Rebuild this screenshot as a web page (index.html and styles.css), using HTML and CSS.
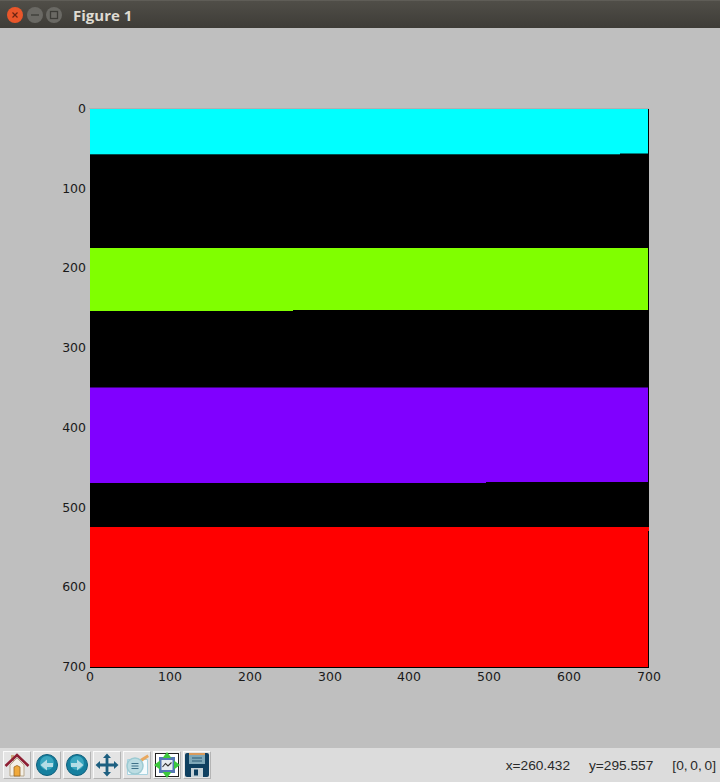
FILE: index.html
```html
<!DOCTYPE html>
<html lang="en">

<head>
    <meta charset="UTF-8">
    <meta name="viewport" content="width=device-width, initial-scale=1.0">
    <title>Figure 1</title>
    <link rel="stylesheet" href="styles.css">
</head>

<body>

    <header class="titlebar">
        <div class="win-buttons">
            <span class="win-btn win-close">
                <svg width="16" height="16" viewBox="0 0 16 16"><path class="glyph-close" d="M5.500 5.500l5 5M10.500 5.500l-5 5"/></svg>
            </span>
            <span class="win-btn">
                <svg width="16" height="16" viewBox="0 0 16 16"><path class="glyph-win" d="M4 8h8"/></svg>
            </span>
            <span class="win-btn">
                <svg width="16" height="16" viewBox="0 0 16 16"><rect class="glyph-win" x="4.500" y="4.500" width="7" height="7"/></svg>
            </span>
        </div>
        <span class="win-title">Figure 1</span>
    </header>

    <main class="canvas">
        <svg class="plot" width="720" height="720" viewBox="0 28 720 720">
            <rect class="frame-top" x="89" y="108" width="560" height="1"/>
            <rect class="black" x="90" y="109" width="559" height="559"/>
            <rect class="cyan" x="90" y="109" width="558" height="44.500"/>
            <rect class="cyan" x="90" y="153" width="530" height="1.300"/>
            <rect class="green" x="90" y="248" width="558" height="62"/>
            <rect class="green" x="90" y="310" width="203" height="1"/>
            <rect class="purple" x="90" y="387.500" width="558" height="94.500"/>
            <rect class="purple" x="90" y="482" width="396" height="1"/>
            <rect class="red" x="90" y="527" width="558" height="140"/>
            <rect class="red" x="648" y="527" width="1" height="4"/>

            <g class="ticks-y">
                <text x="86" y="113">0</text>
                <text x="86" y="193">100</text>
                <text x="86" y="272">200</text>
                <text x="86" y="352">300</text>
                <text x="86" y="432">400</text>
                <text x="86" y="512">500</text>
                <text x="86" y="591">600</text>
                <text x="86" y="671">700</text>
            </g>
            <g class="ticks-x">
                <text x="90" y="681">0</text>
                <text x="170" y="681">100</text>
                <text x="250" y="681">200</text>
                <text x="330" y="681">300</text>
                <text x="409" y="681">400</text>
                <text x="489" y="681">500</text>
                <text x="569" y="681">600</text>
                <text x="649" y="681">700</text>
            </g>
        </svg>
    </main>

    <footer class="toolbar">
        <div class="tools">
            <button class="tool" type="button" title="Home">
                <svg width="26" height="26" viewBox="0 0 26 26">
                    <rect x="7" y="3" width="3" height="6" fill="#c9a77c"/>
                    <path d="M6 13L13 6l7 7v11H6z" fill="#f3efe6" stroke="#b9a88c"/>
                    <path d="M10 24v-9q3-3 6 0v9z" fill="#f0a93a" stroke="#9a6a2a" stroke-width=".8"/>
                    <path d="M1.500 14L13 3l11.500 11" fill="none" stroke="#8e1f33" stroke-width="2.600"/>
                </svg>
            </button>
            <button class="tool" type="button" title="Back">
                <svg width="26" height="26" viewBox="0 0 26 26">
                    <circle cx="13" cy="13" r="10.500" fill="#16809f" stroke="#0e5f7c"/>
                    <circle cx="13" cy="11" r="7" fill="#3aa6bf"/>
                    <path d="M6.500 13L13 7.500V11h6v4h-6v3.500z" fill="#b5dde6"/>
                </svg>
            </button>
            <button class="tool" type="button" title="Forward">
                <svg width="26" height="26" viewBox="0 0 26 26">
                    <circle cx="13" cy="13" r="10.500" fill="#16809f" stroke="#0e5f7c"/>
                    <circle cx="13" cy="11" r="7" fill="#3aa6bf"/>
                    <path d="M19.500 13L13 7.500V11H7v4h6v3.500z" fill="#b5dde6"/>
                </svg>
            </button>
            <button class="tool" type="button" title="Pan">
                <svg width="26" height="26" viewBox="0 0 26 26">
                    <path d="M13 1.500l4 4.500h-2.600v5.600H20V9l4.500 4-4.500 4v-2.600h-5.600V20H17l-4 4.500L9 20h2.600v-5.600H6V17l-4.500-4L6 9v2.600h5.600V6H9z" fill="#1d5f80"/>
                </svg>
            </button>
            <button class="tool" type="button" title="Subplots">
                <svg width="26" height="26" viewBox="0 0 26 26">
                    <path d="M3.500 7.500h20v15h-20z" fill="#f4fbfd" stroke="#a9d3e0"/>
                    <path d="M13 9L23.500 2.500l1.500 2.500-10 6.500z" fill="#e8a860"/>
                    <circle cx="11" cy="14" r="8" fill="#bcdde3" stroke="#9ccad2" stroke-width="1.500"/>
                    <path d="M7.500 11.500h7M7.500 14h7M7.500 16.500h7" stroke="#3f7189" stroke-width="1.100"/>
                </svg>
            </button>
            <button class="tool tool-active" type="button" title="Fit">
                <svg width="26" height="26" viewBox="0 0 26 26">
                    <rect x="1.500" y="1.500" width="23" height="23" fill="#fff" stroke="#222"/>
                    <rect x="5" y="5" width="16" height="16" fill="#5577b5"/>
                    <rect x="7.500" y="8" width="11" height="10" fill="#e8edf2"/>
                    <path d="M8.500 15l3-3.500 2.500 2.500 3.500-3.500" fill="none" stroke="#333" stroke-width="1.100"/>
                    <path d="M13 0l4.500 6h-9zM13 26l4.500-6h-9zM0 13l6-4.500v9zM26 13l-6-4.500v9z" fill="#3cc83c"/>
                </svg>
            </button>
            <button class="tool" type="button" title="Save">
                <svg width="26" height="26" viewBox="0 0 26 26">
                    <rect x="1" y="1" width="24" height="24" rx="2" fill="#0f4060"/>
                    <rect x="5" y="1" width="16" height="11" fill="#7fa8b8"/>
                    <rect x="5" y="1" width="16" height="2" fill="#d99a5b"/>
                    <path d="M8 6h10M8 9h10" stroke="#2c5a74" stroke-width="1.200"/>
                    <rect x="7" y="16" width="12" height="9" fill="#c7d3d8"/>
                    <rect x="10" y="17.500" width="4" height="6" fill="#0f4060"/>
                </svg>
            </button>
        </div>
        <div class="status">
            <span>x=260.432</span>
            <span>y=295.557</span>
            <span class="status-rgb">[0, 0, 0]</span>
        </div>
    </footer>

</body>

</html>
```

FILE: styles.css
```css
body {
    margin: 0;
    padding: 0;
    width: 720px;
    height: 782px;
    overflow: hidden;
    background-color: #bfbfbf;
}

.titlebar {
    display: flex;
    align-items: center;
    height: 28px;
    box-sizing: border-box;
    padding-left: 7px;
    background: linear-gradient(#504e48, #3e3c37);
    border-top: 1px solid #5f5d57;
}

.win-buttons {
    display: flex;
    gap: 3.5px;
}

.win-btn {
    display: flex;
    width: 16px;
    height: 16px;
    border-radius: 50%;
    background-color: #6a6964;
}

.win-close {
    background-color: #e9562a;
}

.glyph-close {
    fill: none;
    stroke: #6b2411;
    stroke-width: 1.2;
}

.glyph-win {
    fill: none;
    stroke: #3c3b37;
    stroke-width: 1.3;
}

.win-title {
    margin-left: 11px;
    font-family: "Open Sans", sans-serif;
    font-size: 15px;
    font-weight: 700;
    color: #dfdbd2;
}

.canvas {
    height: 720px;
    background-color: #bfbfbf;
}

.plot {
    display: block;
}

.frame-top { fill: #b0b0b0; }
.black { fill: #000000; }
.cyan { fill: #00ffff; }
.green { fill: #80ff00; }
.purple { fill: #8000ff; }
.red { fill: #ff0000; }

.ticks-y text,
.ticks-x text {
    font-family: "DejaVu Sans", sans-serif;
    font-size: 12.5px;
    fill: #1a1a1a;
}

.ticks-y text {
    text-anchor: end;
}

.ticks-x text {
    text-anchor: middle;
}

.toolbar {
    display: flex;
    justify-content: space-between;
    align-items: center;
    height: 34px;
    padding: 0 4px 0 3px;
    background-color: #dcdcdc;
}

.tools {
    display: flex;
    gap: 2px;
}

.tool {
    display: flex;
    align-items: center;
    justify-content: center;
    width: 28px;
    height: 28px;
    padding: 0;
    box-sizing: border-box;
    background-color: #e4e4e4;
    border: 1px solid;
    border-color: #fafafa #b4b4b4 #b4b4b4 #fafafa;
}

.tool-active {
    background-color: #f4f4f4;
}

.status {
    display: flex;
    gap: 19px;
    font-family: "Liberation Sans", sans-serif;
    font-size: 13.7px;
    color: #2a2a2a;
}

.status-rgb {
    word-spacing: -1px;
}
```
